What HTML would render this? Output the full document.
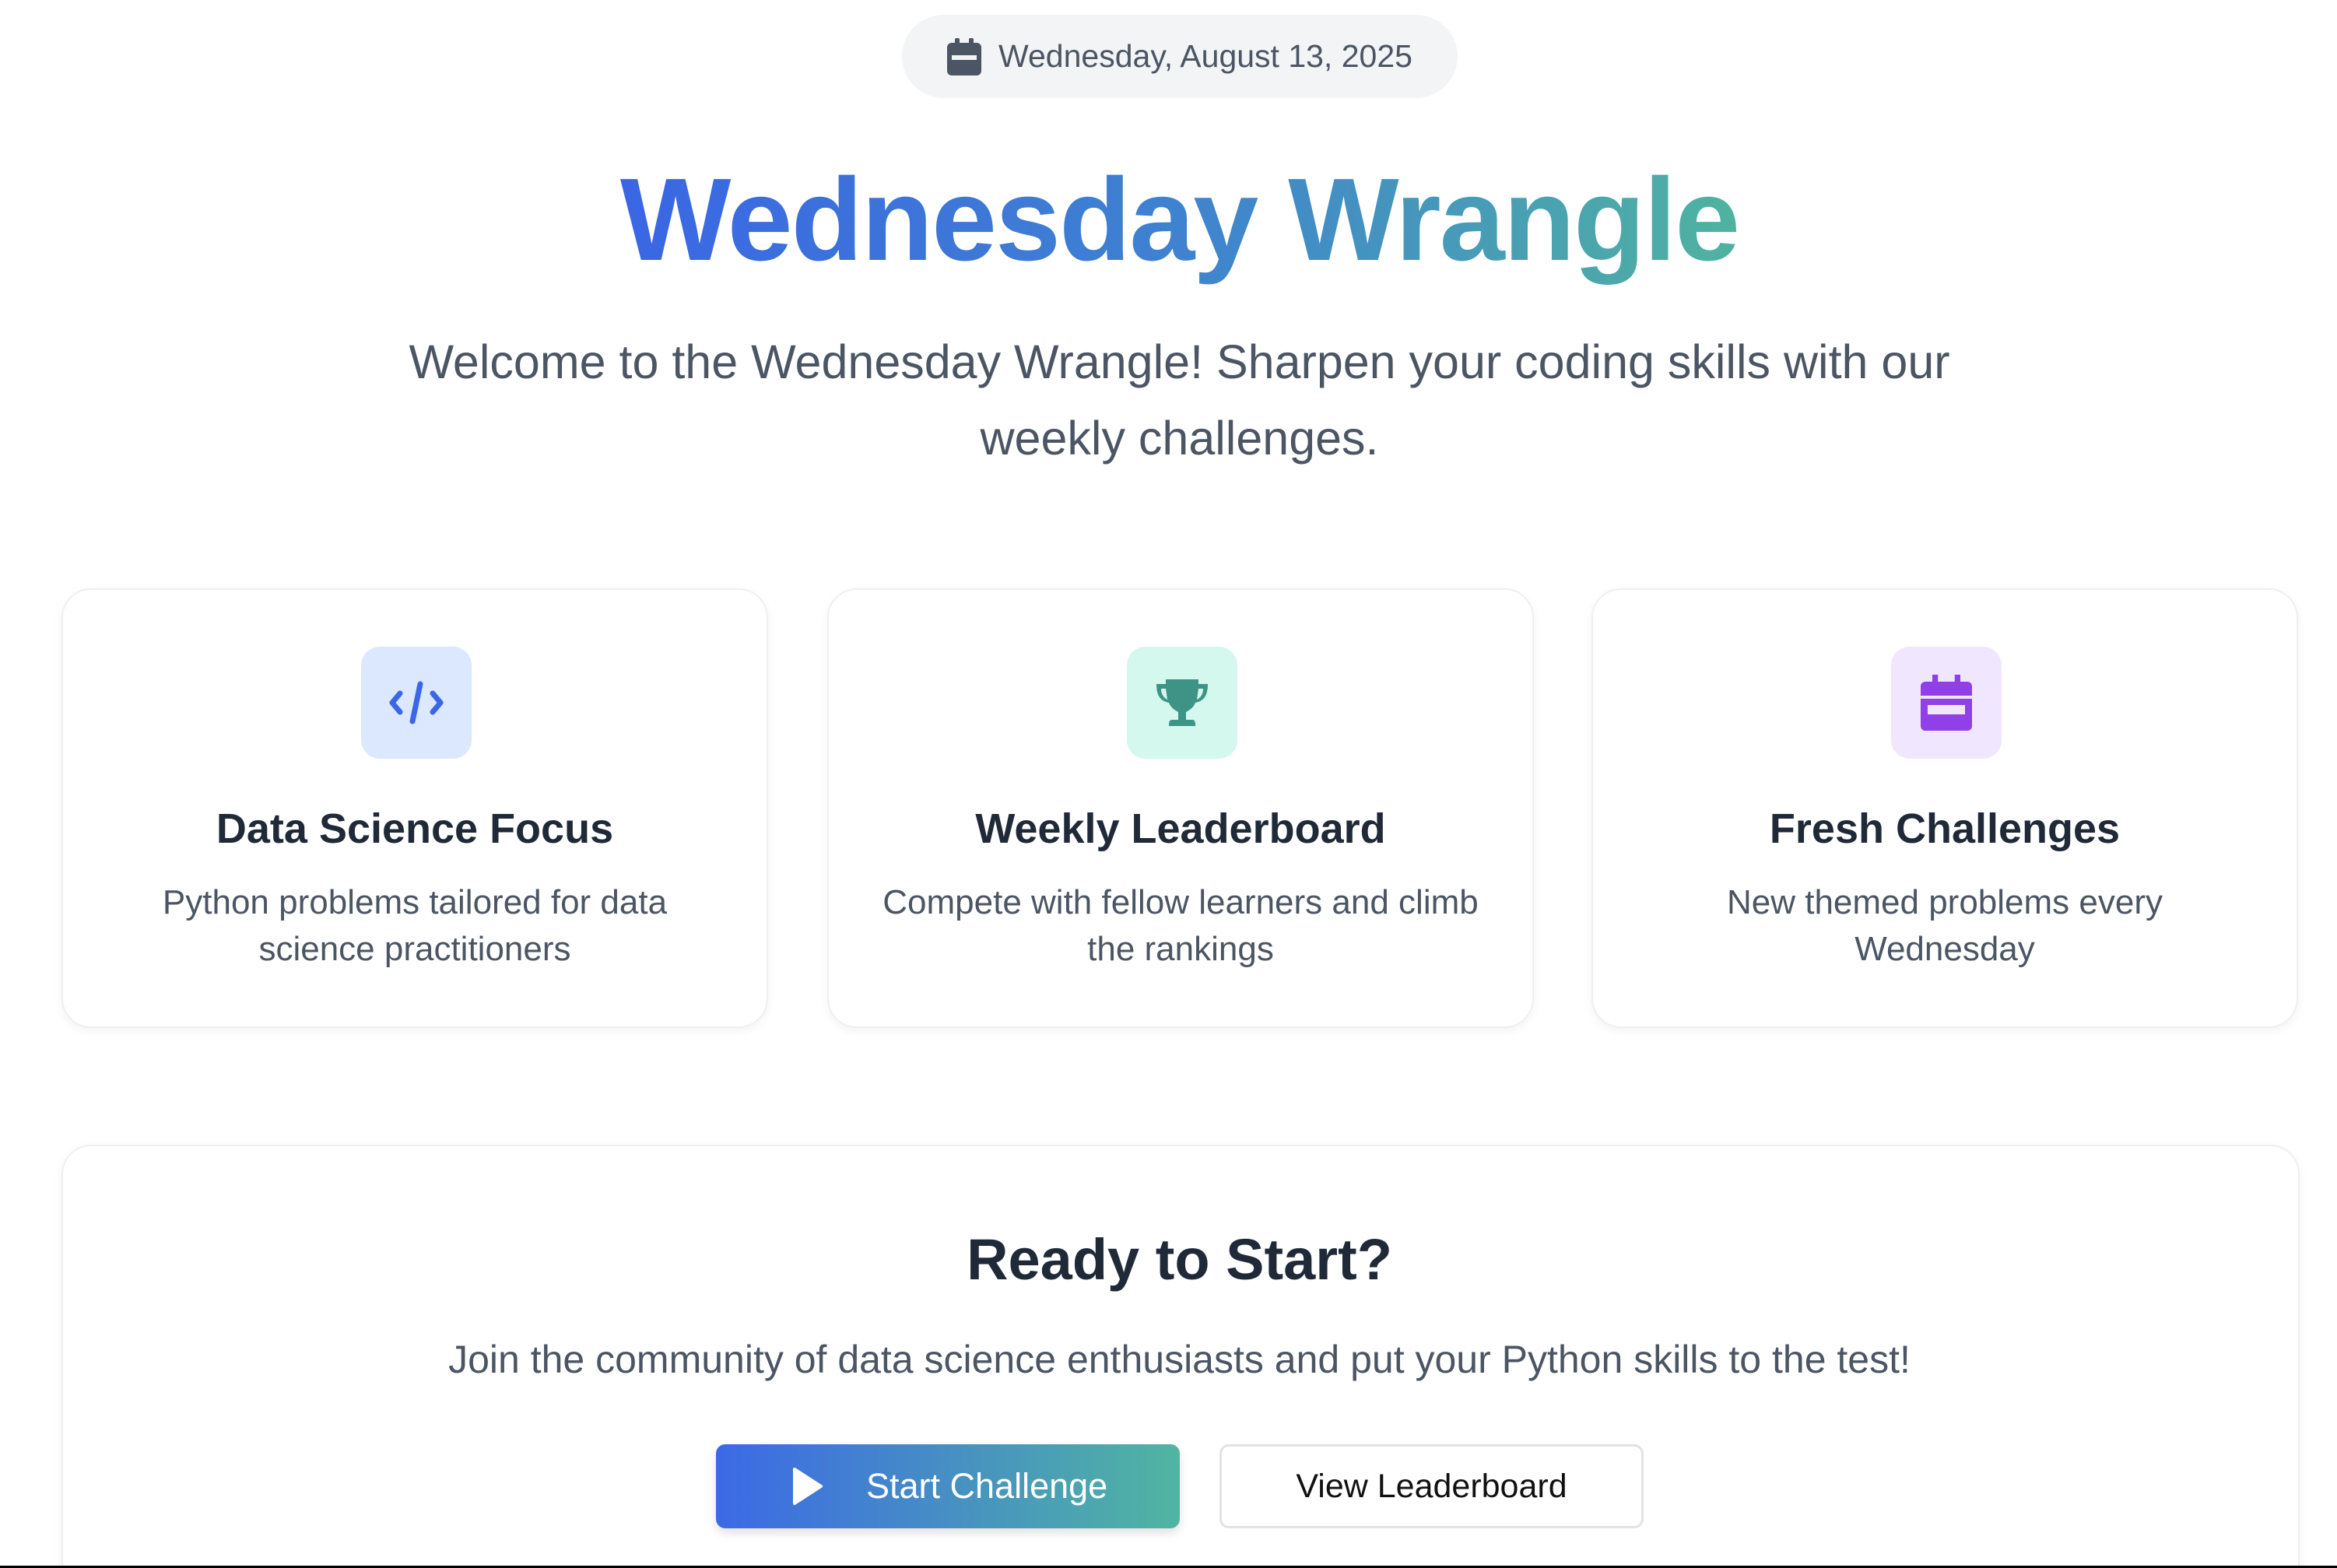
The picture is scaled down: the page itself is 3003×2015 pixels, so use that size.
<!DOCTYPE html>
<html><head><meta charset="utf-8"><style>
*{margin:0;padding:0;box-sizing:border-box}
html,body{width:3003px;height:2015px;overflow:hidden;background:#fff;font-family:"Liberation Sans",sans-serif}
#w{position:relative;width:3003px;height:2015px;overflow:hidden}
.abs{position:absolute}
.ctr{left:14px;width:3003px;text-align:center}
.pill{left:1159px;top:19px;width:714px;height:107px;background:#f3f4f6;border-radius:54px;display:flex;align-items:center;justify-content:center;gap:22px;font-size:41px;color:#4b5563}
.title{top:182px;font-size:151px;font-weight:bold;letter-spacing:-2px;line-height:200px}
.title span{background:linear-gradient(90deg,#3a66e4 0%,#3f82d0 50%,#4fb3a0 100%);-webkit-background-clip:text;background-clip:text;color:transparent}
.sub{top:416px;font-size:61px;line-height:98px;color:#4b5563}
.card{top:756px;width:908px;height:565px;border:2px solid #eeeff1;border-radius:38px;box-shadow:0 4px 12px rgba(0,0,0,0.05);text-align:center}
.ib{position:absolute;left:383px;top:73px;width:142px;height:144px;border-radius:24px;display:flex;align-items:center;justify-content:center}
.ct{position:absolute;left:0;width:100%;top:272px;font-size:54px;font-weight:bold;color:#1f2937;line-height:70px}
.cd{position:absolute;left:60px;width:784px;top:372px;font-size:44px;color:#4b5563;line-height:60px}
.big{left:79px;top:1471px;width:2876px;height:600px;border:2px solid #eeeff1;border-radius:38px;box-shadow:0 4px 12px rgba(0,0,0,0.05)}
</style></head><body><div id="w">
<div class="abs pill"><svg width="44" height="48" viewBox="0 0 22 24"><rect x="5" y="0" width="3" height="5" rx="1" fill="#4b5563"/><rect x="14" y="0" width="3" height="5" rx="1" fill="#4b5563"/><rect x="0" y="3" width="22" height="21" rx="3" fill="#4b5563"/><rect x="3" y="11" width="16" height="3" fill="#f3f4f6"/></svg><span>Wednesday, August 13, 2025</span></div>
<div class="abs ctr title"><span>Wednesday Wrangle</span></div>
<div class="abs ctr sub">Welcome to the Wednesday Wrangle! Sharpen your coding skills with our<br>weekly challenges.</div>

<div class="abs card" style="left:79px"><div class="ib" style="background:#dbe8fe"><svg width="74" height="60" viewBox="0 0 37 30" fill="none" stroke="#3b67e6" stroke-width="3.5" stroke-linecap="round" stroke-linejoin="round"><path d="M8 9 3 15l5 6M29 9l5 6-5 6M21 3l-5 24"/></svg></div><div class="ct">Data Science Focus</div><div class="cd">Python problems tailored for data science practitioners</div></div>

<div class="abs card" style="left:1063px"><div class="ib" style="background:#d4f7ee"><svg width="74" height="68" viewBox="0 0 37 34"><path d="M8 2h21v3h6c0 8-3 11-8 12-1 3-4 5-6 6v5h4c2 0 2 2 2 4H10c0-2 0-4 2-4h4v-5c-2-1-5-3-6-6C5 16 2 13 2 5h6zM5 8c0 4 2 6 4 7L8 8zM32 8h-3l-1 7c2-1 4-3 4-7z" fill="#3d9486"/></svg></div><div class="ct">Weekly Leaderboard</div><div class="cd">Compete with fellow learners and climb the rankings</div></div>

<div class="abs card" style="left:2045px"><div class="ib" style="background:#f0e6fd"><svg width="66" height="72" viewBox="0 0 22 24"><rect x="5" y="0" width="2.4" height="5" fill="#9040e6"/><rect x="14.6" y="0" width="2.4" height="5" fill="#9040e6"/><rect x="0" y="3" width="22" height="21" rx="2" fill="#9040e6"/><rect x="0" y="9" width="22" height="1.3" fill="#f0e6fd"/><rect x="3" y="13" width="16" height="4" fill="#f0e6fd"/></svg></div><div class="ct">Fresh Challenges</div><div class="cd">New themed problems every Wednesday</div></div>

<div class="abs big"></div>
<div class="abs ctr" style="top:1576px;font-size:74px;font-weight:bold;color:#1f2937">Ready to Start?</div>
<div class="abs ctr" style="top:1718px;font-size:50px;color:#4b5563">Join the community of data science enthusiasts and put your Python skills to the test!</div>
<div class="abs" style="left:920px;top:1856px;width:596px;height:108px;border-radius:12px;background:linear-gradient(90deg,#3c69e6,#50b5a1);box-shadow:0 6px 12px rgba(0,0,0,0.12);display:flex;align-items:center;color:#fff;font-size:45px"><svg style="margin-left:97px" width="42" height="48" viewBox="0 0 21 24"><path d="M2 1 19 12 2 23z" fill="#fff" stroke="#fff" stroke-width="2" stroke-linejoin="round"/></svg><span style="margin-left:54px">Start Challenge</span></div>
<div class="abs" style="left:1567px;top:1856px;width:545px;height:108px;border-radius:12px;border:3px solid #e3e3e3;background:#fff;display:flex;align-items:center;justify-content:center;font-size:43px;color:#111">View Leaderboard</div>
<div class="abs" style="left:0;top:2012px;width:3003px;height:3px;background:#000"></div>
</div></body></html>
